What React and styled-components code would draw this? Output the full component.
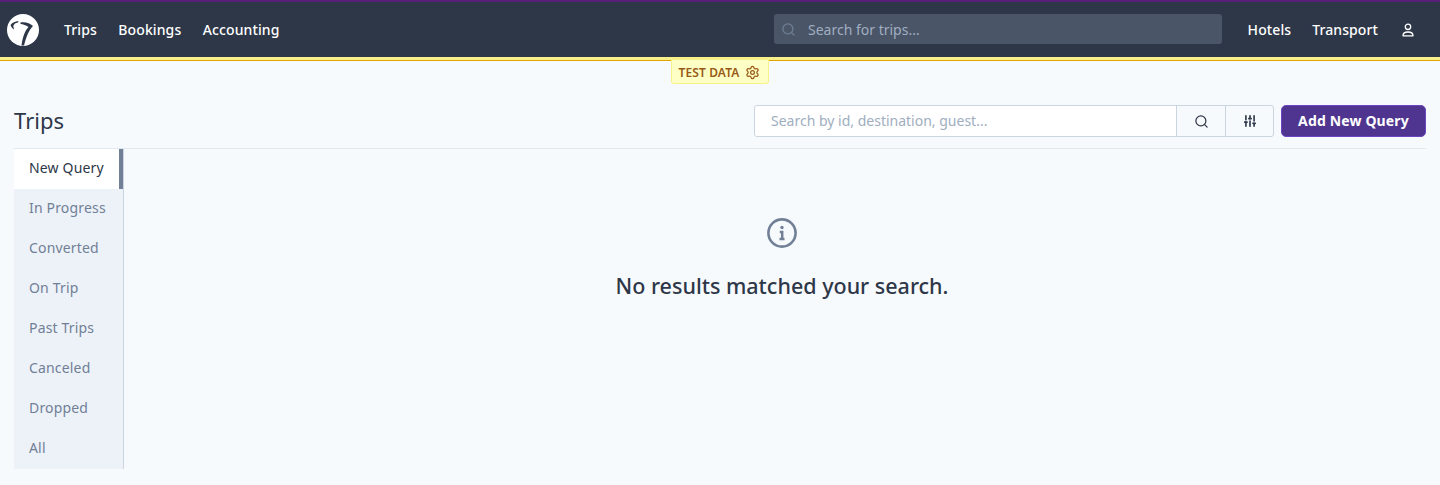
import React from 'react';
import styled, { createGlobalStyle } from 'styled-components';
import { Search, SlidersVertical, Settings } from 'lucide-react';

const FONT = '"Noto Sans", "Open Sans", sans-serif';

const GlobalStyle = createGlobalStyle`
  html, body { margin: 0; padding: 0; height: 100%; background: #f7fafd; }
  body { font-family: ${FONT}; color: #2d3748; overflow: hidden; }
  * { box-sizing: border-box; }
`;

const tabs = ['New Query', 'In Progress', 'Converted', 'On Trip', 'Past Trips', 'Canceled', 'Dropped', 'All'];

const Logo = () => (
  <svg width="34" height="34" viewBox="0 0 34 34">
    <circle cx="17" cy="17" r="16" fill="#fff" />
    <path d="M4.500 12 C6.500 9.500 9 8.300 12.500 8 L12 9.500 C9.500 9.800 8 11 7.300 13 L8 16.500 C6.500 15.500 5.300 14 4.500 12 Z" fill="#2d3748" />
    <path d="M14.500 9.500 C18 8.500 24 9.500 27 13 C23 17 20 24 18 32.500 L15.500 32.500 C16.500 25 18.500 18 22.500 14 C20 12.300 17 11.300 14.500 11 Z" fill="#2d3748" />
  </svg>
);

const InfoIcon = () => (
  <svg width="32" height="32" viewBox="0 0 32 32" fill="none" stroke="#718096" strokeWidth="2.6">
    <circle cx="16" cy="16" r="13.600" />
    <circle cx="16" cy="10.500" r="1.700" fill="#718096" stroke="none" />
    <path d="M13.800 15 H16.200 V22 M13.500 22 H18.500" strokeWidth="2.500" />
  </svg>
);

const UserIcon = () => (
  <UserSvg width="12" height="14" viewBox="0 0 12 14" fill="none" stroke="#fff" strokeWidth="1.300">
    <circle cx="6" cy="3.800" r="2.700" />
    <path d="M1 12.800 C1 10 3 9 6 9 C9 9 11 10 11 12.800 Z" strokeLinejoin="round" />
  </UserSvg>
);

const App = () => {
  return (
    <>
      <GlobalStyle />
      <Header>
        <Logo />
        <NavLinks>
          <NavLink>Trips</NavLink>
          <NavLink>Bookings</NavLink>
          <NavLink>Accounting</NavLink>
        </NavLinks>
        <HeaderSearch>
          <Search size={15} strokeWidth={2} color="#718096" />
          <span>Search for trips...</span>
        </HeaderSearch>
        <RightLinks>
          <NavLink>Hotels</NavLink>
          <NavLink>Transport</NavLink>
          <UserIcon />
        </RightLinks>
      </Header>
      <BadgeRow>
        <TestBadge>
          TEST DATA
          <Settings size={15} strokeWidth={2} />
        </TestBadge>
      </BadgeRow>
      <Page>
        <TitleRow>
          <Title>Trips</Title>
          <Tools>
            <SearchGroup>
              <SearchInput>Search by id, destination, guest...</SearchInput>
              <IconButton $width={49}><Search size={15} strokeWidth={2} /></IconButton>
              <IconButton $width={48}><SlidersVertical size={14} strokeWidth={2.8} /></IconButton>
            </SearchGroup>
            <AddButton>Add New Query</AddButton>
          </Tools>
        </TitleRow>
        <Body>
          <Sidebar>
            {tabs.map((tab, i) => (
              <Tab key={tab} $active={i === 0}>{tab}</Tab>
            ))}
          </Sidebar>
          <Empty>
            <InfoIcon />
            <EmptyText>No results matched your search.</EmptyText>
          </Empty>
        </Body>
      </Page>
    </>
  );
};

export default App;

const Header = styled.header`
  height: 60px;
  background: #2d3748;
  border-top: 2px solid #571f78;
  border-bottom: 3px solid #faf089;
  box-shadow: 0 1px 0 #e2a400;
  display: flex;
  align-items: center;
  padding: 0 26px 0 6px;
  color: #fff;
  position: relative;
`;

const NavLinks = styled.nav`
  display: flex;
  gap: 21.5px;
  margin-left: 24px;
`;

const NavLink = styled.span`
  font-size: 14px;
  font-weight: 500;
  letter-spacing: 0.1px;
  color: #fff;
`;

const UserSvg = styled.svg`
  margin-left: 3px;
`;

const HeaderSearch = styled.div`
  position: absolute;
  left: 774px;
  top: 12px;
  width: 448px;
  height: 30px;
  background: #4a5568;
  border-radius: 3px;
  display: flex;
  align-items: center;
  gap: 12px;
  padding-left: 7px;
  font-size: 14px;
  color: #a0aec0;
`;

const RightLinks = styled.div`
  margin-left: auto;
  display: flex;
  align-items: center;
  gap: 21px;
`;

const BadgeRow = styled.div`
  display: flex;
  justify-content: center;
  height: 24px;
  padding-right: 1px;
`;

const TestBadge = styled.div`
  height: 24px;
  width: 98px;
  padding-top: 1px;
  background: #feffc4;
  border: 1px solid #faf089;
  border-top: none;
  border-radius: 0 0 3px 3px;
  display: flex;
  align-items: center;
  justify-content: center;
  gap: 6px;
  font-size: 12px;
  font-weight: 600;
  letter-spacing: 0.1px;
  color: #975a16;
  position: relative;
  z-index: 1;
`;

const Page = styled.main`
  padding: 21px 14px 0;
`;

const TitleRow = styled.div`
  display: flex;
  align-items: center;
  justify-content: space-between;
  height: 44px;
  border-bottom: 1px solid #e2e8f0;
  padding-bottom: 11px;
`;

const Title = styled.h1`
  margin: 0 0 2px;
  font-size: 22px;
  font-weight: 400;
  line-height: 28px;
  color: #2d3748;
`;

const Tools = styled.div`
  display: flex;
  gap: 7px;
`;

const SearchGroup = styled.div`
  display: flex;
  width: 520px;
  height: 32px;
  border: 1px solid #cbd5e0;
  border-radius: 3px;
`;

const SearchInput = styled.div`
  flex: 1;
  background: #fff;
  display: flex;
  align-items: center;
  padding: 0 0 2px 16px;
  font-size: 14px;
  color: #a0aec0;
  border-radius: 3px 0 0 3px;
`;

const IconButton = styled.div`
  width: ${(p) => p.$width}px;
  display: flex;
  align-items: center;
  justify-content: center;
  border-left: 1px solid #cbd5e0;
  color: #2d3748;
`;

const AddButton = styled.div`
  width: 145px;
  height: 32px;
  padding-bottom: 2px;
  background: #4f358f;
  border: 1px solid #6b46c1;
  border-radius: 5px;
  color: #fff;
  font-size: 14px;
  font-weight: 700;
  letter-spacing: 0.15px;
  display: flex;
  align-items: center;
  justify-content: center;
`;

const Body = styled.div`
  display: flex;
`;

const Sidebar = styled.aside`
  width: 110px;
  display: flex;
  flex-direction: column;
  background: #edf2f9;
  border-right: 1px solid #cbd5e0;
`;

const Tab = styled.div`
  height: 40px;
  display: flex;
  align-items: center;
  padding: 0 0 4px 15px;
  font-size: 14px;
  letter-spacing: 0.17px;
  color: ${(p) => (p.$active ? '#2d3748' : '#718096')};
  background: ${(p) => (p.$active ? '#fff' : 'transparent')};
  border-right: ${(p) => (p.$active ? '4px solid #718096' : 'none')};
`;

const Empty = styled.div`
  flex: 1;
  display: flex;
  flex-direction: column;
  align-items: center;
  padding: 68px 0 0 14px;
  gap: 22px;
`;

const EmptyText = styled.div`
  font-size: 21.5px;
  font-weight: 500;
  color: #2d3748;
`;
